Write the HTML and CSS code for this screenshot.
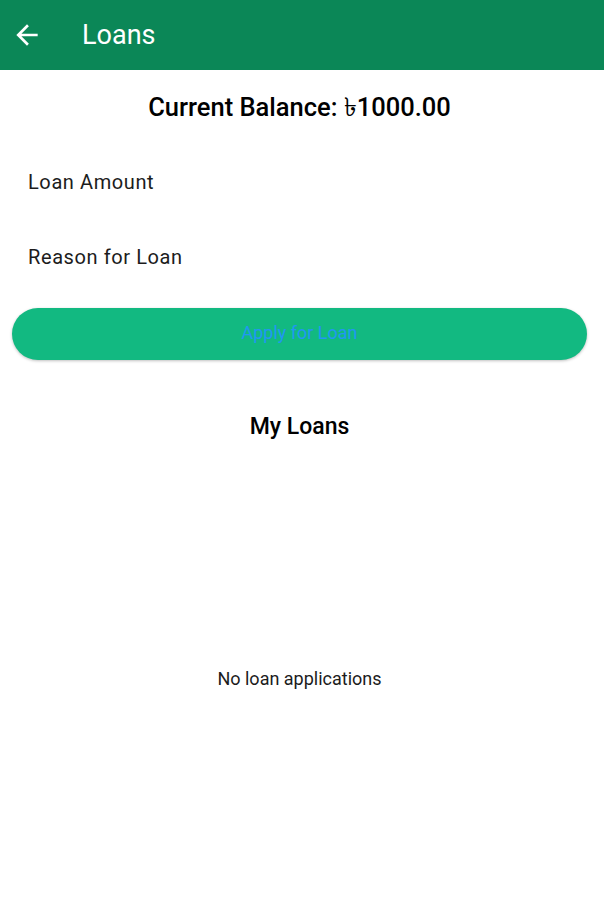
FILE: index.html
```html
<!DOCTYPE html>
<html>
<head>
<meta charset="utf-8">
<link rel="stylesheet" href="styles.css">
</head>
<body>
<header class="appbar">
  <svg class="back" viewBox="0 0 24 24" width="32" height="32"><path d="M20 11H7.83l5.59-5.59L12 4l-8 8 8 8 1.41-1.41L7.83 13H20v-2z" fill="#fff"/></svg>
  <h1 class="title">Loans</h1>
</header>
<main class="content">
  <h2 class="balance">Current Balance: ৳1000.00</h2>
  <div class="field first">Loan Amount</div>
  <div class="field">Reason for Loan</div>
  <button class="apply">Apply for Loan</button>
  <h2 class="section">My Loans</h2>
  <div class="empty">No loan applications</div>
</main>
</body>
</html>
```
FILE: styles.css
```css
* { box-sizing: border-box; }
html, body { margin: 0; padding: 0; background: #fff; }
body { font-family: Roboto, "Noto Sans", sans-serif; width: 604px; height: 905px; }
.appbar {
  height: 70px;
  background: #0b8757;
  display: flex;
  align-items: center;
  padding-left: 11px;
}
.back { display: block; }
.title {
  margin: 0 0 0 39px;
  color: #fff;
  font-size: 27px;
  font-weight: 400;
}
.content {
  display: flex;
  flex-direction: column;
  padding: 0 17px 0 12px;
}
.balance {
  margin: 19px 0 0;
  text-align: center;
  font-size: 25.5px;
  font-weight: 500;
  color: #000;
  line-height: 36px;
}
.field {
  font-size: 20px;
  letter-spacing: 0.6px;
  color: #1c1c1c;
  padding-left: 16px;
  height: 75px;
  display: flex;
  align-items: center;
}
.field.first { margin-top: 19px; }
.apply {
  margin-top: 14px;
  height: 52px;
  padding: 0 0 3px;
  border: none;
  border-radius: 26px;
  background: #12b981;
  color: #2196f3;
  font-family: Roboto, sans-serif;
  font-size: 18px;
  box-shadow: 0 1px 3px rgba(0,0,0,0.25);
}
.section {
  margin: 53px 0 0;
  text-align: center;
  font-size: 23px;
  font-weight: 500;
  color: #000;
}
.empty {
  margin: 228px 0 0;
  text-align: center;
  font-size: 18px;
  color: #1c1c1c;
}
```
